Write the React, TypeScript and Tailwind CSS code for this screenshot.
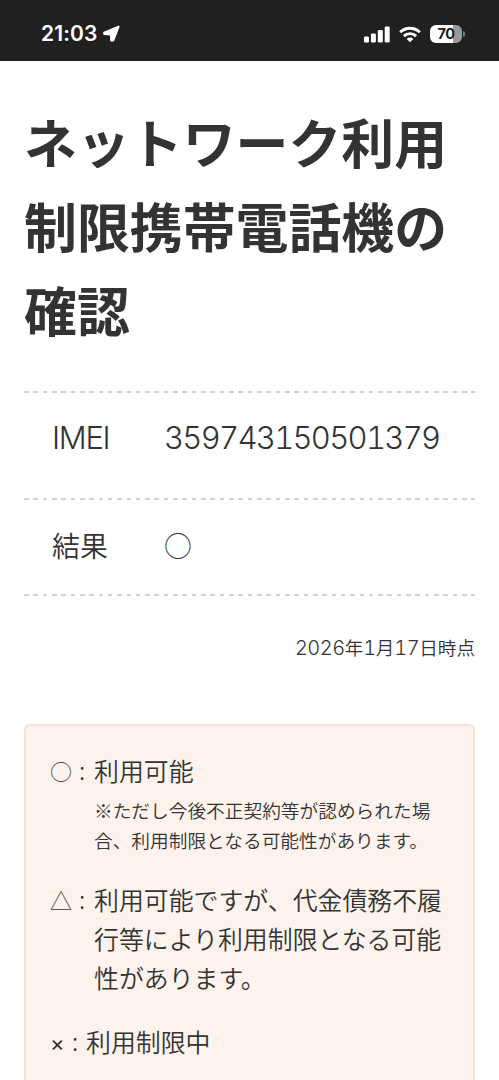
import React from "react";

const Divider: React.FC = () => <div className="h-[2px] w-full bg-[repeating-linear-gradient(90deg,#d2d2d2_0_4.6px,transparent_4.6px_9.32px)]" />;

// Latin digits are set slightly wider than the kanji face provides
const Num: React.FC<{ children: React.ReactNode }> = ({ children }) => (
  <span className="font-['Inter',sans-serif] text-[20px] font-light tabular-nums tracking-[-0.5px]">{children}</span>
);

const StatusBar: React.FC = () => {
  return (
    <header className="flex h-[61px] items-start justify-between bg-[#202020] pl-[41px] pr-[34px] pt-[22px] text-white">
      <div className="flex h-6 items-center gap-[5px]">
        <span className="font-['Inter',sans-serif] text-[21px] font-semibold leading-6 tracking-[0.1px]">21:03</span>
        <svg width="18" height="18" viewBox="0 0 18 18" fill="currentColor" stroke="currentColor" strokeWidth="2" strokeLinejoin="round">
          <path d="M16.600 1.600L11.200 15.600L9.200 15.600L8.800 9.400L2.200 9L2.200 7.700Z" />
        </svg>
      </div>

      <div className="flex h-6 items-center">
        {/* Signal */}
        <svg width="26" height="17" viewBox="0 0 26 17" fill="currentColor">
          <rect x="0" y="10.500" width="5" height="6" rx="1.300" />
          <rect x="6.900" y="7.500" width="5" height="9" rx="1.300" />
          <rect x="13.800" y="4" width="5" height="12.500" rx="1.300" />
          <rect x="20.700" y="0.500" width="5" height="16" rx="1.300" />
        </svg>
        {/* Wifi */}
        <svg className="ml-[9px]" width="22" height="17" viewBox="0 0 22 17" fill="none" stroke="currentColor" strokeWidth="2.900">
          <path d="M1.200 6.200a14 14 0 0 1 19.600 0" />
          <path d="M4.900 10.100a8.700 8.700 0 0 1 12.200 0" />
          <path d="M11 16.300l-3.300-3.400a4.700 4.700 0 0 1 6.600 0Z" fill="currentColor" stroke="none" />
        </svg>
        {/* Battery */}
        <div className="ml-[9px] flex h-[18px] w-[32px] items-center justify-center rounded-[6px] bg-[linear-gradient(90deg,#fff_72%,#999_72%)]">
          <span className="font-['Inter',sans-serif] text-[14.5px] font-bold leading-none tracking-[-0.4px] text-[#202020]">70</span>
        </div>
        <div className="ml-px h-[6px] w-[2px] rounded-r-full bg-[#777]" />
      </div>
    </header>
  );
};

export default function App() {
  return (
    <div className="h-[1080px] w-[499px] overflow-hidden bg-white font-['Noto_Sans_CJK_JP',sans-serif] text-[#333]">
      <StatusBar />

      <main className="px-[24px]">
        <h1 className="mt-[38px] h-[252px] whitespace-nowrap text-[52.9px] font-bold leading-[84px]">
          ネットワーク利用
          <br />
          制限携帯電話機の
          <br />
          確認
        </h1>

        {/* Result table */}
        <dl className="mt-[40px] w-[451px]">
          <Divider />
          <div className="flex h-[105px] px-[28px] pt-[22px] font-['Inter','Noto_Sans_CJK_JP',sans-serif] text-[31px] font-light leading-[46px]">
            <dt className="w-[112px] shrink-0 tracking-[-1.3px]">IMEI</dt>
            <dd className="whitespace-nowrap tabular-nums tracking-[-1.7px]">359743150501379</dd>
          </div>
          <Divider />
          <div className="flex h-[94px] px-[28px] pt-[22px] text-[27.900px] font-[350] leading-[46px]">
            <dt className="w-[112px] shrink-0">結果</dt>
            <dd className="font-light">○</dd>
          </div>
          <Divider />
        </dl>

        <p className="mt-[36px] h-[30px] w-[451px] whitespace-nowrap text-right text-[18.6px] font-[350] leading-[30px]">
          <Num>2026</Num>年<Num>1</Num>月<Num>17</Num>日時点
        </p>

        {/* Legend */}
        <section className="mt-[62px] h-[380px] w-[451px] rounded-[6px] border-2 border-[#f5e2d3] bg-[#fdf3ec] pl-[24px] pt-[25px] text-[24.900px] font-[350] leading-[39px]">
          <div className="flex">
            <span className="w-[25px] text-[22px] font-light">○</span>
            <span className="w-[19px] pr-[5px] text-center font-light leading-[36px]">:</span>
            <div className="whitespace-nowrap">
              <p>利用可能</p>
              <p className="mt-[5px] text-[18.7px] leading-[30px]">
                ※ただし今後不正契約等が認められた場
                <br />
                合、利用制限となる可能性があります。
              </p>
            </div>
          </div>
          <div className="mt-[25px] flex">
            <span className="w-[25px] text-[22px] font-light">△</span>
            <span className="w-[19px] pr-[5px] text-center font-light leading-[36px]">:</span>
            <p className="whitespace-nowrap">
              利用可能ですが、代金債務不履
              <br />
              行等により利用制限となる可能
              <br />
              性があります。
            </p>
          </div>
          <div className="mt-[25px] flex">
            <span className="w-[17px] pt-[2px] font-['Inter',sans-serif] text-[22px] font-normal">×</span>
            <span className="w-[19px] pr-[3px] text-center font-light leading-[36px]">:</span>
            <p>利用制限中</p>
          </div>
        </section>
      </main>
    </div>
  );
}
